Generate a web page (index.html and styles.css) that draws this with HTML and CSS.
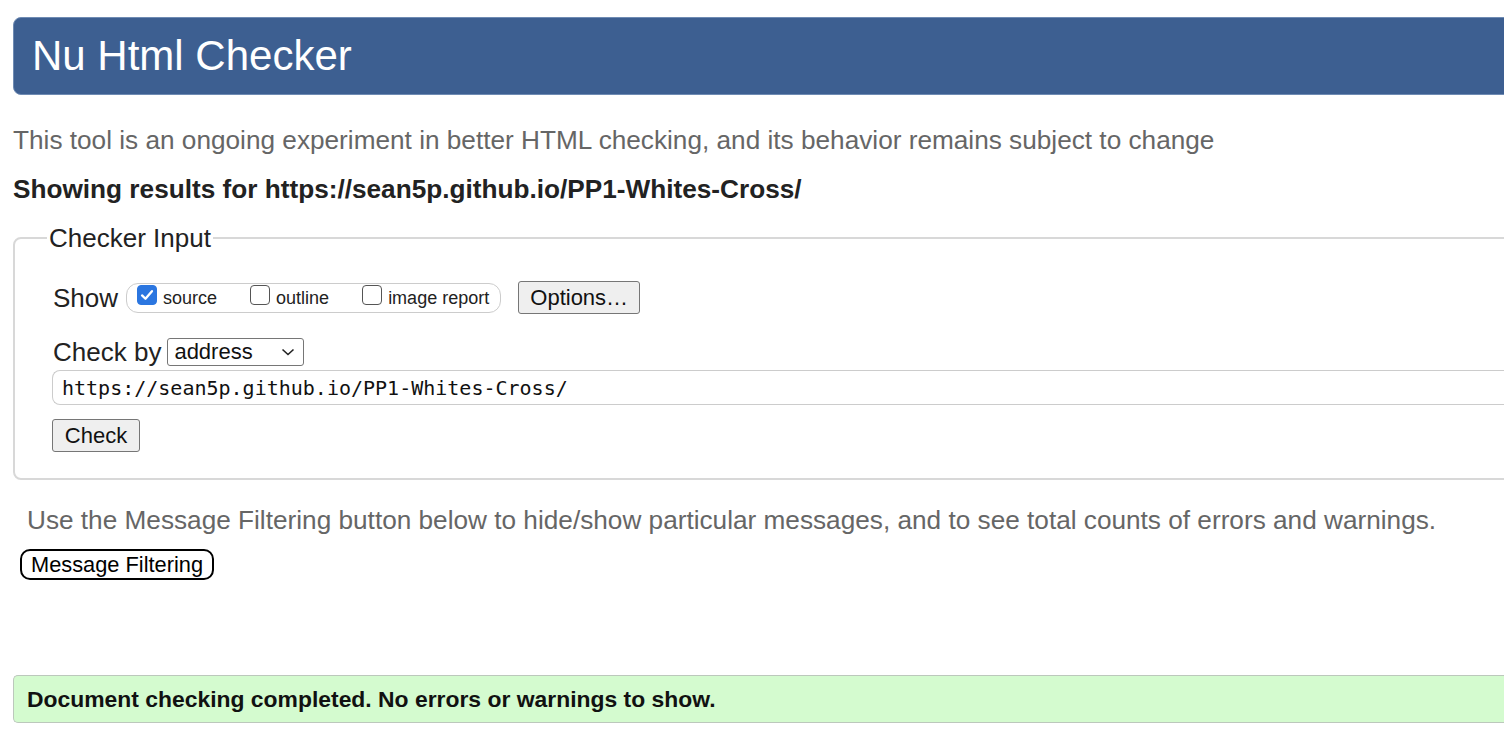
FILE: index.html
```html
<!DOCTYPE html>
<html lang="en">
<head>
<meta charset="utf-8">
<title>Nu Html Checker</title>
<link rel="stylesheet" href="styles.css">
</head>
<body>
<header class="banner"><h1 class="title">Nu Html Checker</h1></header>
<p class="intro">This tool is an ongoing experiment in better HTML checking, and its behavior remains subject to change</p>
<p class="results">Showing results for https://sean5p.github.io/PP1-Whites-Cross/</p>
<fieldset class="input-box">
  <legend class="legend">Checker Input</legend>
  <div class="row show-row">
    <span class="label">Show</span>
    <span class="group">
      <label class="opt"><span class="cb cb-on"><svg viewBox="0 0 20 20" width="20" height="20"><path d="M4.5 10.5 L8.3 14.2 L15.5 5.8" fill="none" stroke="#fff" stroke-width="2.6" stroke-linecap="round" stroke-linejoin="round"/></svg></span>source</label>
      <label class="opt"><span class="cb"></span>outline</label>
      <label class="opt"><span class="cb"></span>image report</label>
    </span>
    <span class="btn btn-options">Options…</span>
  </div>
  <div class="row by-row">
    <span class="label">Check by</span>
    <span class="select">address<svg class="chev" viewBox="0 0 14 8" width="14" height="8"><path d="M1.5 1.5 L7 6.5 L12.5 1.5" fill="none" stroke="#222" stroke-width="1.6"/></svg></span>
  </div>
  <div class="url">https://sean5p.github.io/PP1-Whites-Cross/</div>
  <div class="row"><span class="btn btn-check">Check</span></div>
</fieldset>
<p class="filter-text">Use the Message Filtering button below to hide/show particular messages, and to see total counts of errors and warnings.</p>
<div class="filter-wrap"><span class="filter-btn">Message Filtering</span></div>
<div class="success">Document checking completed. No errors or warnings to show.</div>
</body>
</html>
```
FILE: styles.css
```css
html, body {
  margin: 0;
  padding: 0;
  background: #fff;
  overflow: hidden;
}
body {
  width: 1560px;
  padding: 17px 0 0 13px;
  font-family: "Liberation Sans", Arial, sans-serif;
  color: #222;
}
.banner {
  background: #3d5f91;
  border: 1px solid #6f8bb3;
  border-radius: 8px 0 0 8px;
  height: 76px;
  display: flex;
  align-items: center;
  padding-left: 18px;
}
.title {
  margin: 0;
  font-weight: normal;
  font-size: 42px;
  line-height: 50px;
  color: #fff;
}
.intro {
  margin: 30px 0 0 0;
  font-size: 26.2px;
  line-height: 30px;
  color: #666;
}
.results {
  margin: 19px 0 0 0;
  font-size: 26.2px;
  line-height: 30px;
  font-weight: bold;
  color: #222;
}
.input-box {
  margin: 19px 0 0 0;
  border: 2px solid #d8d8d8;
  border-radius: 8px 0 0 8px;
  padding: 0 0 26px 38px;
  min-width: 0;
}
.legend {
  font-size: 26px;
  line-height: 30px;
  color: #222;
  padding: 0 2px;
  margin-left: -6px;
}
.row {
  display: flex;
  align-items: center;
}
.label {
  font-size: 26px;
  line-height: 30px;
  color: #222;
}
.group {
  display: inline-flex;
  align-items: center;
  margin-left: 8px;
  border: 1px solid #ccc;
  border-radius: 12px;
  height: 30px;
  box-sizing: border-box;
  padding: 0 11px 0 10px;
  gap: 33px;
}
.opt {
  display: inline-flex;
  align-items: center;
  font-size: 18px;
  color: #222;
  position: relative;
  top: 1px;
}
.cb {
  width: 20px;
  height: 20px;
  border: 1.5px solid #555;
  border-radius: 4px;
  box-sizing: border-box;
  margin-right: 6px;
  position: relative;
  top: -4px;
}
.cb-on {
  background: #2b76e0;
  border-color: #2b76e0;
  display: inline-flex;
  align-items: center;
  justify-content: center;
}
.cb-on svg { width: 18px; height: 18px; }
.btn {
  display: inline-flex;
  align-items: center;
  justify-content: center;
  background: #efefef;
  border: 1px solid #767676;
  border-radius: 3px;
  font-size: 22px;
  color: #111;
  height: 33px;
  padding: 0 12px;
  box-sizing: border-box;
}
.btn-options { margin-left: 17px; width: 122px; }
.show-row { margin-top: 28px; }
.by-row { margin-top: 23px; }
.select {
  display: inline-flex;
  align-items: center;
  justify-content: space-between;
  margin-left: 6px;
  width: 137px;
  height: 28px;
  box-sizing: border-box;
  border: 1px solid #767676;
  border-radius: 3px;
  padding: 0 8px 0 6px;
  font-size: 22px;
  color: #111;
}
.url {
  margin-top: 3px;
  margin-left: -1px;
  height: 35px;
  box-sizing: border-box;
  border: 1px solid #ccc;
  border-radius: 8px 0 0 8px;
  border-right: 0;
  display: flex;
  align-items: center;
  padding-left: 9px;
  font-family: "DejaVu Sans Mono", "Liberation Mono", monospace;
  font-size: 20px;
  color: #111;
}
.btn-check {
  margin: 14px 0 0 -1px;
  width: 88px;
}
.filter-text {
  margin: 25px 0 0 14px;
  font-size: 26.2px;
  line-height: 30px;
  color: #666;
}
.filter-wrap { margin: 14px 0 0 7px; display: flex; }
.filter-btn {
  display: inline-flex;
  align-items: center;
  height: 31px;
  box-sizing: border-box;
  border: 2.5px solid #000;
  border-radius: 10px;
  padding: 0 9px 0 9px;
  font-size: 21.8px;
  color: #000;
}
.success {
  margin-top: 95px;
  height: 48px;
  box-sizing: border-box;
  background: #d4fbcf;
  border: 1px solid #bcc8bc;
  border-right: 0;
  border-radius: 5px 0 0 5px;
  display: flex;
  align-items: center;
  padding-left: 13px;
  font-size: 22.9px;
  font-weight: bold;
  color: #111;
}
```
